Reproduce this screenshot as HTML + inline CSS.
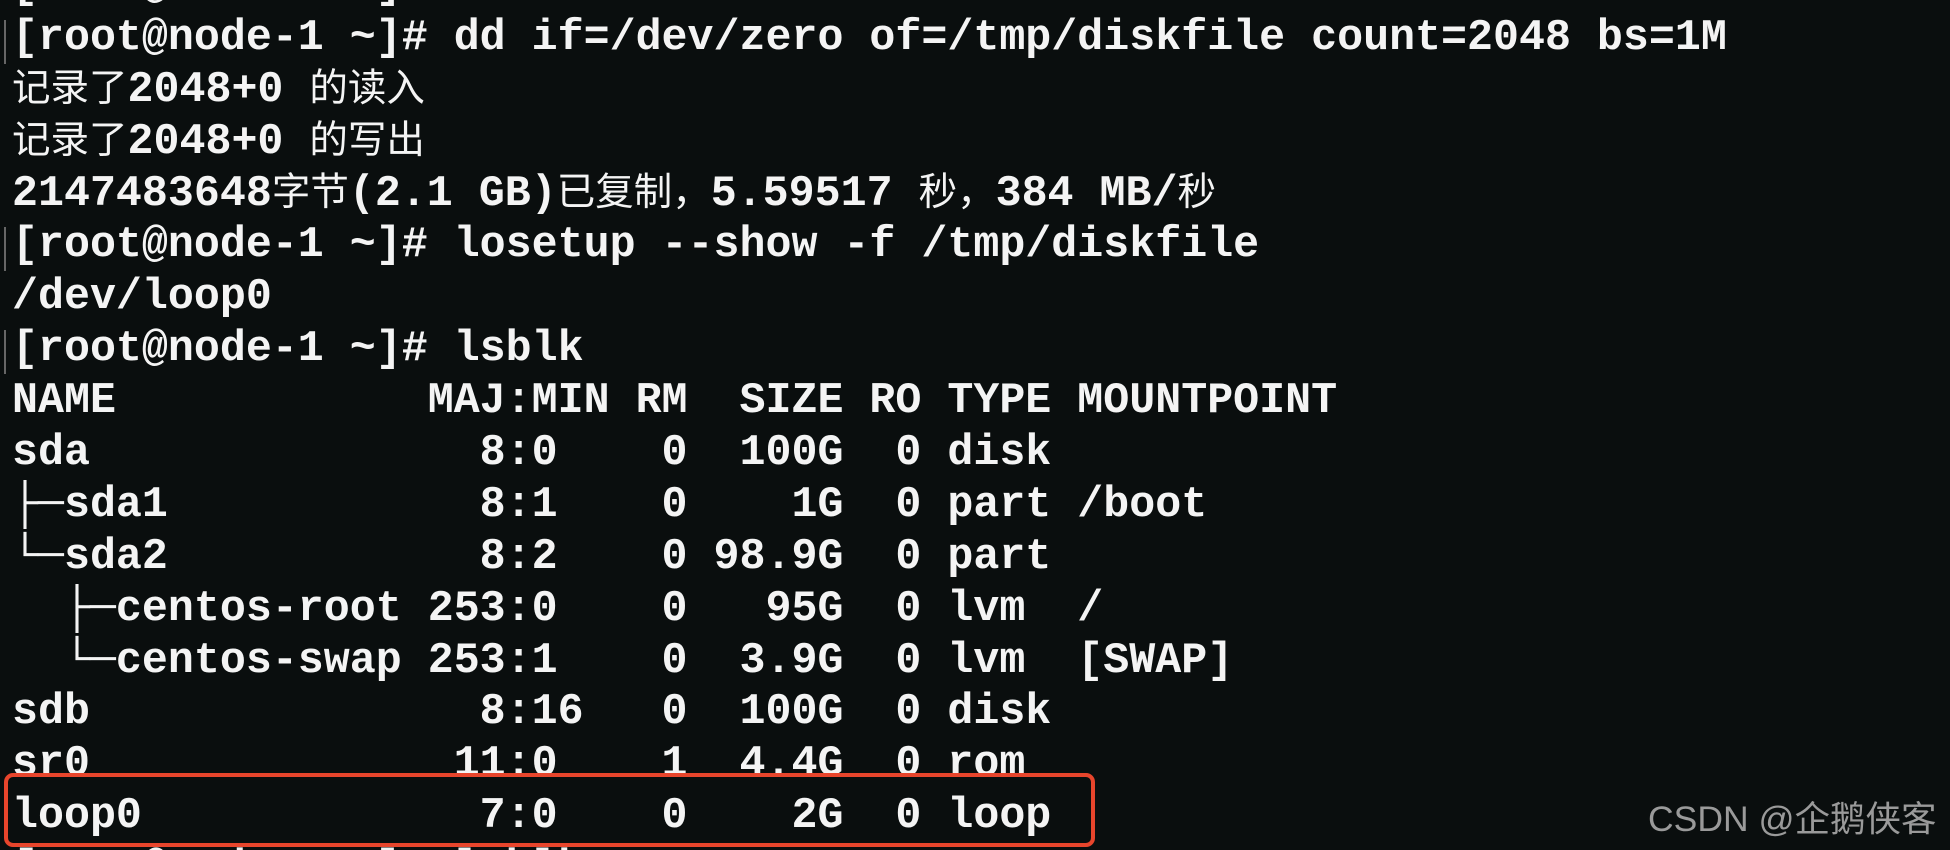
<!DOCTYPE html>
<html><head><meta charset="utf-8"><style>
html,body{margin:0;padding:0;background:#0a0e0e;width:1950px;height:850px;overflow:hidden;position:relative}
.t{position:absolute;left:12px;top:-39px;margin:0;font-family:"Liberation Mono","DejaVu Sans Mono","Noto Sans CJK SC",monospace;font-weight:bold;font-size:43.3px;color:#f4f4f4}
.t div{height:51.9px;line-height:51.9px;overflow:visible;white-space:pre}
.c{font-family:"Noto Sans CJK SC","WenQuanYi Zen Hei",sans-serif;font-weight:normal;font-size:38.5px;line-height:0}
.box{position:absolute;left:4px;top:773px;width:1083px;height:66px;border:4px solid #e8452c;border-radius:9px}
.wm{position:absolute;left:1648px;top:791px;font-family:"Liberation Sans","Noto Sans CJK SC",sans-serif;font-size:35.5px;color:#9a9a9a}
.sel{position:absolute;left:4px;width:2px;height:44px;background:#666}
</style></head><body>
<div class="sel" style="top:20px"></div>
<div class="sel" style="top:227px"></div>
<div class="sel" style="top:330px"></div>
<div class="t"><div>[root@node-1 ~]# </div><div>[root@node-1 ~]# dd if=/dev/zero of=/tmp/diskfile count=2048 bs=1M</div><div><span class="c">记录了</span>2048+0 <span class="c">的读入</span></div><div><span class="c">记录了</span>2048+0 <span class="c">的写出</span></div><div>2147483648<span class="c">字节</span>(2.1 GB)<span class="c">已复制，</span>5.59517 <span class="c">秒，</span>384 MB/<span class="c">秒</span></div><div>[root@node-1 ~]# losetup --show -f /tmp/diskfile</div><div>/dev/loop0</div><div>[root@node-1 ~]# lsblk</div><div>NAME            MAJ:MIN RM  SIZE RO TYPE MOUNTPOINT</div><div>sda               8:0    0  100G  0 disk</div><div>├─sda1            8:1    0    1G  0 part /boot</div><div>└─sda2            8:2    0 98.9G  0 part</div><div>  ├─centos-root 253:0    0   95G  0 lvm  /</div><div>  └─centos-swap 253:1    0  3.9G  0 lvm  [SWAP]</div><div>sdb               8:16   0  100G  0 disk</div><div>sr0              11:0    1  4.4G  0 rom</div><div>loop0             7:0    0    2G  0 loop</div><div>[root@node-1 ~]# lsblk</div></div>
<div class="box"></div>
<div class="wm">CSDN @企鹅侠客</div>
</body></html>
